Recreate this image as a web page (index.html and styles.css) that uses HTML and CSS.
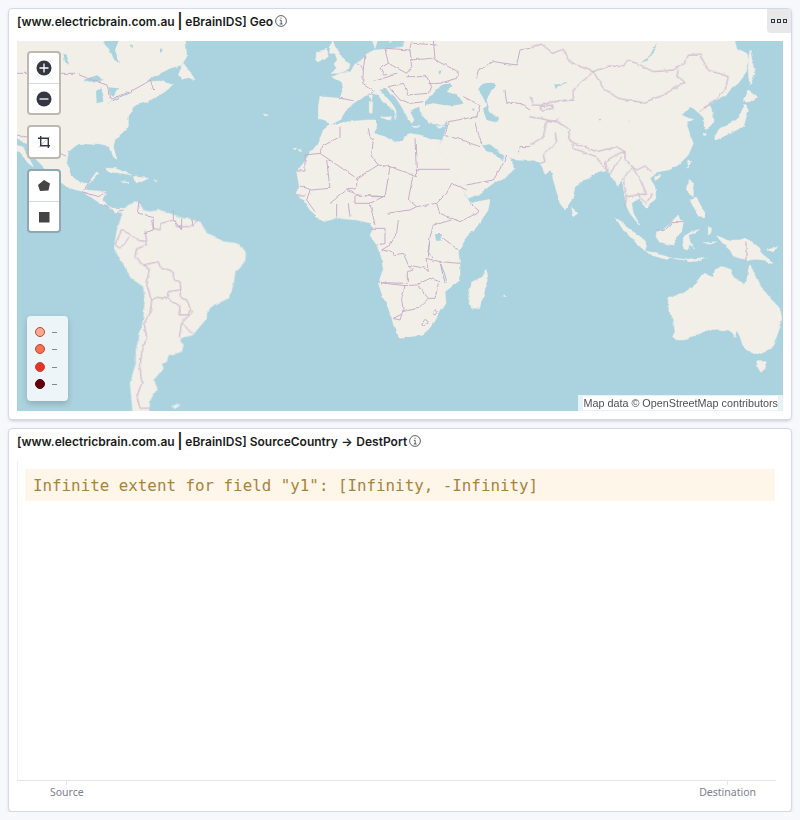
FILE: index.html
```html
<!DOCTYPE html>
<html lang="en">
<head>
  <meta charset="UTF-8" />
  <title>eBrainIDS dashboard</title>
  <link rel="stylesheet" href="styles.css">
</head>
<body>
  <section class="panel panel-map">
    <header class="panel-title">
      <span>[www.electricbrain.com.au <b class="pipe">|</b> eBrainIDS] Geo</span>
      <svg class="info" viewBox="0 0 12 12"><circle cx="6" cy="6" r="5.4"/><path d="M4.8 5.3H6.2V9M4.7 9H7.6M6 2.7V3.9"/></svg>
    </header>
    <button class="panel-menu"><i></i><i></i><i></i></button>

    <div class="map">
      <svg class="map-world" viewBox="17 41 766 370" preserveAspectRatio="none">
        <defs>
          <!-- roughens the hand drawn coast so it reads like a raster tile -->
          <filter id="rough" filterUnits="userSpaceOnUse" x="0" y="20" width="800" height="410" color-interpolation-filters="sRGB">
            <feTurbulence type="fractalNoise" baseFrequency=".14" numOctaves="3" seed="4" result="noise"/>
            <feDisplacementMap in="SourceGraphic" in2="noise" scale="3" xChannelSelector="R" yChannelSelector="G"/>
            <feGaussianBlur stdDeviation=".3"/>
          </filter>
        </defs>
        <g class="world">
          <!-- coordinates in each group are 3x page px, offset by the group's translate -->
          <g class="land" transform="scale(.3333)">
            <polygon points="30,100 555,100 560,170 545,195 510,205 490,215 450,235 440,245 480,243 520,255 495,275 470,290 440,305 410,315 400,320 385,350 385,380 365,400 345,420 340,440 350,478 340,470 330,440 300,435 265,432 230,435 205,455 200,490 212,525 240,550 265,550 290,515 296,520 278,540 262,555 255,570 320,575 310,600 325,620 340,625 375,625 375,640 345,635 330,620 300,610 250,575 200,560 155,525 110,480 90,440 30,400"/>
            <polygon points="30,425 70,445 90,480 100,500 85,490 60,455 30,450"/>
            <polygon points="315,505 345,505 370,515 395,525 365,520 325,515"/>
            <polygon points="400,530 445,535 425,545 405,545"/>
            <polygon points="365,545 385,547 372,550"/>
            <polygon points="462,542 475,543 465,546"/>
            <polygon points="535,225 550,190 570,215 585,240 570,235 545,235"/>
          </g>
          <g class="water" transform="scale(.3333)">
            <polygon points="300,100 365,100 345,150 360,190 340,175 330,150 315,135"/>
            <polygon points="250,240 290,225 312,240 285,250"/>
            <polygon points="288,270 305,262 310,305 290,310"/>
            <polygon points="325,262 355,265 340,290 330,285"/>
            <polygon points="190,160 200,165 207,195 195,185"/>
            <polygon points="385,135 400,140 392,145"/>
            <polygon points="480,145 490,150 480,155"/>
          </g>
          <!-- south america -->
          <g class="land" transform="translate(100 220) scale(.3333)">
            <polygon points="70,-30 85,-45 115,-55 130,-30 150,-25 180,-30 195,-25 215,-18 250,-5 300,5 320,40 345,50 370,65 410,70 437,95 435,125 405,155 400,195 385,235 340,255 320,280 320,295 290,330 278,345 240,355 250,375 245,395 205,405 200,425 185,430 190,445 160,480 172,505 150,540 145,590 100,590 90,490 108,430 108,390 130,300 135,240 130,200 95,175 65,125 42,85 50,35 60,5"/>
            <polygon points="215,558 240,555 225,566"/>
          </g>
          <!-- africa -->
          <g class="land" transform="translate(260 40) scale(.3333)">
            <polygon points="210,255 240,250 265,245 320,240 345,240 350,265 340,280 375,290 400,305 430,305 445,280 480,285 510,298 545,300 535,320 555,355 575,395 600,435 625,480 630,490 690,478 685,510 650,560 640,572 345,572 335,550 290,540 230,535 190,545 150,510 130,480 108,460 118,440 110,395 130,370 150,340 175,310 190,270"/>
            <polygon points="100,325 110,325 105,330"/>
            <polygon points="115,328 125,330 118,334"/>
            <polygon points="10,222 25,225 15,228"/>
          </g>
          <g class="land" transform="translate(360 220) scale(.3333)">
            <polygon points="30,0 40,25 30,45 50,75 65,115 70,150 55,190 65,220 85,265 95,295 110,340 120,358 150,350 190,345 215,320 235,285 258,250 255,215 300,180 300,135 295,95 320,50 365,0"/>
            <polygon points="378,148 385,180 375,210 360,262 335,265 325,230 335,190 365,170"/>
            <polygon points="428,225 440,228 430,230"/>
          </g>
          <g class="water" transform="translate(360 220) scale(.3333)">
            <polygon points="225,42 245,42 245,62 228,62"/>
          </g>
          <!-- europe + middle east -->
          <g class="land" transform="translate(260 40) scale(.3333)">
            <polygon points="812,-15 437,-15 430,20 405,25 378,28 345,30 320,42 305,60 285,72 272,95 245,100 215,110 245,130 250,145 240,175 205,172 180,170 175,200 175,235 195,240 210,255 240,240 255,215 280,190 310,170 335,160 355,165 375,190 395,205 410,220 405,240 412,215 395,190 360,150 375,145 405,170 425,200 445,235 455,250 462,240 450,215 470,205 482,200 485,225 510,250 545,255 562,240 555,280 548,300 535,320 555,355 575,395 600,435 625,475 660,460 700,430 735,415 765,385 745,350 735,345 725,365 705,340 680,335 665,315 690,312 730,345 770,360 812,362"/>
            <polygon points="215,-5 225,20 240,40 250,60 270,72 265,90 235,100 210,100 230,85 222,72 232,60 225,40 208,40"/>
            <polygon points="170,35 200,28 205,50 175,65 168,55"/>
            <polygon points="365,232 395,230 390,243"/>
            <polygon points="328,185 338,185 336,220 328,218"/>
            <polygon points="330,165 337,165 335,182"/>
            <polygon points="455,258 480,260 465,263"/>
            <polygon points="530,260 555,255 540,265"/>
            <polygon points="335,-5 355,-5 345,25"/>
            <polygon points="370,-15 420,-15 390,8"/>
          </g>
          <g class="water" transform="translate(260 40) scale(.3333)">
            <polygon points="495,185 510,170 530,150 545,135 570,128 575,140 560,155 590,165 612,190 580,197 550,195 520,190 495,195"/>
            <polygon points="655,150 670,130 700,128 710,135 695,150 680,180 690,215 718,240 700,245 680,240 670,215 680,195 668,170"/>
            <polygon points="535,95 545,90 540,105"/>
            <polygon points="635,205 645,208 640,214"/>
          </g>
          <!-- asia -->
          <g class="land" transform="translate(530 40) scale(.3333)">
            <polygon points="-10,-15 610,-15 620,25 650,40 655,60 645,100 640,110 625,130 600,150 585,170 560,178 540,195 550,225 552,245 530,268 523,265 522,235 510,222 490,205 480,200 455,225 475,235 490,238 470,250 480,285 490,310 475,345 445,375 415,390 385,395 360,415 375,440 378,475 350,505 340,490 325,475 305,490 310,520 330,555 320,545 300,520 288,495 280,440 275,420 262,440 240,400 225,390 205,395 175,415 135,440 128,475 105,510 90,490 70,420 62,390 45,400 30,370 0,355 -10,362"/>
            <polygon points="660,30 675,100 660,135 655,100 655,60"/>
            <polygon points="640,180 655,150 685,170 650,190"/>
            <polygon points="555,285 570,265 620,240 645,195 655,210 640,260 570,295 555,300"/>
            <polygon points="520,280 530,282 525,288"/>
            <polygon points="125,500 143,520 130,530"/>
            <polygon points="478,360 485,365 470,385"/>
            <polygon points="375,410 390,405 380,422"/>
            <polygon points="470,440 480,420 490,430 490,470 480,465"/>
            <polygon points="480,480 500,475 520,510 525,530 500,520"/>
          </g>
          <g class="water" transform="translate(530 40) scale(.3333)">
            <polygon points="333,68 360,45 380,8 375,30 350,62"/>
            <polygon points="72,135 95,130 118,130 85,135 78,148"/>
            <polygon points="100,178 115,180 105,184"/>
            <polygon points="295,240 303,240 300,246"/>
            <polygon points="205,238 215,236 210,242"/>
          </g>
          <!-- islands and australia -->
          <g class="land" transform="translate(600 190) scale(.3333)">
            <polygon points="205,325 225,315 250,310 272,295 285,285 300,262 315,250 328,258 340,262 345,240 358,230 375,232 395,240 393,255 400,262 415,270 435,285 440,270 445,240 450,225 460,245 470,268 480,290 495,305 510,325 525,340 540,355 545,385 540,410 530,440 515,475 495,485 480,492 460,490 440,480 430,470 420,440 410,420 405,440 395,425 385,420 375,420 350,418 325,420 310,425 295,435 270,440 250,450 230,450 218,440 225,425 222,400 212,375 205,350"/>
            <polygon points="470,515 500,515 495,535 485,547 475,535"/>
            <polygon points="350,137 370,145 385,152 400,150 420,150 435,145 455,155 480,175 490,195 510,210 522,222 505,218 490,210 470,208 450,210 420,205 400,198 390,180 378,170 360,150"/>
            <polygon points="170,125 190,120 205,105 218,92 235,75 240,90 250,95 245,125 225,145 220,165 195,160 178,155 168,140"/>
            <polygon points="48,85 65,95 90,120 115,135 135,155 140,165 135,182 115,165 95,145 70,120"/>
            <polygon points="137,183 165,190 195,198 215,205 200,208 170,200 145,193"/>
            <polygon points="220,205 250,210 290,205 320,205 300,212 270,215 250,208"/>
            <polygon points="250,140 275,125 300,118 280,130 265,135 270,155 285,178 270,165 262,180 255,178 250,160"/>
            <polygon points="295,55 315,65 312,80 295,78 290,65"/>
            <polygon points="280,40 300,45 295,55 282,50"/>
            <polygon points="325,110 335,115 332,130 325,135"/>
            <polygon points="500,180 535,170 520,185"/>
            <polygon points="310,158 350,155 330,163"/>
          </g>
          <path class="river" d="M108 103L120 97L130 93M430 240L428 252L433 258M440 262L443 275L445 282"/>
          <g class="borders">
            <g transform="translate(260 40) scale(.3333)">
              <path d="M240 175L280 182M290 70L310 90L308 130L340 150L335 160M315 45L310 90M340 125L400 105M375 25L385 70L360 85L370 105L415 100M378 25L450 30L455 80L440 100L385 70M450 60L515 55L595 95L590 115L540 130L505 130M455 0L450 30M460 10L530 15M520 0L525 55M650 115L655 90L700 65L770 75L780 30L810 25M440 110L500 110L515 140L505 160L445 165L430 130M430 130L385 140L420 180L450 190L490 185M610 170L660 195L650 230L565 245M645 250L665 310M735 150L740 190L780 190L810 210M810 320L780 320L775 340M565 245L555 290L590 295L660 320M620 435L700 420L730 370L740 345M340 300L335 350L355 375M325 265L330 290L345 300M240 260L240 290L185 320L180 340L290 415L355 375L390 380L470 410M465 295L470 410M470 388L570 388M390 380L380 440L375 470L285 465M458 410L445 480L470 500L530 490L560 460L575 430L620 450M110 393L135 393L135 345L180 340M200 360L210 445L155 450L120 438M290 415L290 445L260 450L210 490M375 470L340 470L290 465L260 450M285 465L285 490L330 490L370 470M230 490L230 530M265 490L270 530M330 490L345 555M380 520L450 510L470 500M530 490L540 520L600 545L660 515L630 490M150 450L140 480L165 515M110 465L135 465"/>
            </g>
            <g transform="translate(360 220) scale(.3333)">
              <path d="M35 25L75 25L75 70L50 75M65 90L95 95L100 105L130 100L145 135L195 145L205 155L198 115L240 125L255 165L260 185M115 0L110 40L90 75L65 90M205 110L210 50L220 15L275 0M250 55L295 90M240 125L300 130M145 135L160 150L142 155L142 190L60 188L135 197L125 235L130 280M130 197L170 195L210 175L240 185M175 197L205 235L175 265L130 275M205 235L225 235L235 190M130 280L100 295L120 300L130 270M195 298L205 305L195 318L185 312ZM222 270L232 276L225 285L217 280Z"/>
            </g>
            <g transform="translate(530 40) scale(.3333)">
              <path d="M0 20L35 13L70 40L100 28L125 70L190 95L235 78L280 80L290 60L320 70L370 95L430 90L465 70L475 45L510 45L535 90L595 110L585 150L555 180L520 205M190 95L220 145L265 175L340 188L400 165L465 125L440 110L445 90M190 95L150 130L130 150L130 180L70 185L35 195L5 195M0 170L10 190M0 230L30 235L75 245L85 235M30 200L65 195L70 205L35 210ZM0 315L40 290L50 245L85 245L120 270L115 300L135 310L200 335L260 320L285 335L285 360L320 390L345 378L365 395M75 275L80 305L40 345L45 365L30 370M130 310L130 325L200 350M200 355L235 395L225 365L265 340L285 335M240 400L275 350M275 420L310 380M310 385L340 440L350 460L320 465L290 470L280 420M320 465L350 490L365 460M285 500L290 470M510 215L555 180"/>
            </g>
            <g transform="translate(17 40) scale(.3333)">
              <path d="M0 100L175 100L225 120L270 135L280 180L300 170L340 155L385 130L400 120L410 150M0 285L50 300L100 325L150 350M200 450L220 420M195 455L245 470L270 455M250 490L275 500M300 515L320 510"/>
            </g>
            <g transform="scale(.3333)">
              <path d="M420 605L415 640L460 650L460 690L430 700M520 630L520 660L545 690M545 655L545 690M575 655L580 680"/>
            </g>
            <g transform="translate(100 220) scale(.3333)">
              <path d="M155 0L160 25L180 30L185 10L220 0M225 0L230 20L270 20L295 0M135 30L140 65L110 60L95 45L65 30L45 75L60 85L90 50M135 65L140 75L110 85L105 110L130 135L175 125L180 140L220 155L220 180L240 185L245 235L262 240L270 265L278 275L245 310L280 340M130 135L148 145L140 195L155 240L170 232L200 235L205 215L240 210M200 235L240 260L237 285L265 285L270 265M155 240L150 280L132 310L140 350L125 400L120 440L125 490L110 530L120 565L150 565M245 310L238 350"/>
            </g>
            <g transform="translate(600 190) scale(.3333)">
              <path d="M438 155L438 210M170 120L195 122L215 95L250 95"/>
            </g>
          </g>
        </g>
      </svg>

      <div class="map-tools">
        <div class="tool-group">
          <button class="tool">
            <svg viewBox="0 0 16 16"><circle class="solid" cx="8" cy="8" r="7.5"/><path class="cut" d="M8 3.5V12.5M3.5 8H12.5"/></svg>
          </button>
          <button class="tool">
            <svg viewBox="0 0 16 16"><circle class="solid" cx="8" cy="8" r="7.5"/><path class="cut" d="M3.5 8H12.5"/></svg>
          </button>
        </div>
        <div class="tool-group">
          <button class="tool">
            <svg viewBox="0 0 16 16"><path class="crop" d="M4.7 2V11.7H14M2 4.3H12.3V14"/><path class="crop-line" d="M2.5 13.5L14 2.5"/></svg>
          </button>
        </div>
        <div class="tool-group tool-group-dark">
          <button class="tool">
            <svg viewBox="0 0 16 16"><polygon class="shape" points="8,2 14,5.5 12.5,12.5 4,13 2,7"/></svg>
          </button>
          <button class="tool">
            <svg viewBox="0 0 16 16"><rect class="shape" x="3" y="3" width="10.5" height="10.5"/></svg>
          </button>
        </div>
      </div>

      <ul class="legend">
        <li><i class="dot dot-1"></i>–</li>
        <li><i class="dot dot-2"></i>–</li>
        <li><i class="dot dot-3"></i>–</li>
        <li><i class="dot dot-4"></i>–</li>
      </ul>

      <div class="attribution"><span>Map data © OpenStreetMap contributors</span></div>
    </div>
  </section>

  <section class="panel panel-flow">
    <header class="panel-title">
      <span>[www.electricbrain.com.au <b class="pipe">|</b> eBrainIDS] SourceCountry <b class="arrow">→</b> DestPort</span>
      <svg class="info" viewBox="0 0 12 12"><circle cx="6" cy="6" r="5.4"/><path d="M4.8 5.3H6.2V9M4.7 9H7.6M6 2.7V3.9"/></svg>
    </header>
    <div class="chart">
      <div class="chart-plot">
        <pre class="chart-error">Infinite extent for field "y1": [Infinity, -Infinity]</pre>
      </div>
      <div class="chart-axis">
        <span>Source</span>
        <span>Destination</span>
      </div>
    </div>
  </section>
</body>
</html>
```

FILE: styles.css
```css
* {
  box-sizing: border-box;
}
body {
  margin: 0;
  padding: 8px 8px 0;
  background: #f6f8fc;
  font-family: Inter, 'Liberation Sans', sans-serif;
  color: #1a1c21;
  display: flex;
  flex-direction: column;
  gap: 8px;
}
.panel {
  position: relative;
  background: #fff;
  border: 1px solid #d3dae6;
  border-radius: 4px;
  box-shadow: 0 2px 3px -1px #98a2b366, 0 1px 5px -2px #98a2b34d;
  display: flex;
  flex-direction: column;
}
.panel-map {
  height: 412px;
}
.panel-flow {
  height: 384px;
}
.panel-title {
  height: 32px;
  padding: 5px 8px 0;
  display: flex;
  align-items: flex-start;
  gap: 2px;
  font-size: 12px;
  font-weight: 600;
  line-height: 16px;
}
.pipe {
  font-size: 15px;
  line-height: 12px;
  font-weight: 600;
  margin: 0 -.4px;
}
.arrow {
  font-weight: 600;
  margin: 0 .5px;
}
.info {
  width: 12px;
  height: 12px;
  margin-top: 1px;
  fill: none;
  stroke: #343741;
  stroke-width: .8;
}
.panel-menu {
  position: absolute;
  top: 0;
  right: 0;
  width: 24px;
  height: 24px;
  padding: 0;
  border: none;
  border-radius: 0 4px 0 4px;
  background: #e8e8ea;
  display: flex;
  justify-content: center;
  align-items: center;
  gap: 2px;
}
.panel-menu i {
  width: 4px;
  height: 4px;
  border: 1px solid #343741;
}

.map {
  position: relative;
  flex: 1;
  margin: 0 8px 8px;
  background: #abd3df;
  overflow: hidden;
}
.map-world {
  display: block;
  width: 100%;
  height: 100%;
}
.world {
  filter: url(#rough);
}
.land polygon {
  fill: #f2efe9;
  stroke: #f2efe9;
  stroke-width: .5;
  stroke-linejoin: round;
  vector-effect: non-scaling-stroke;
}
.water polygon {
  fill: #abd3df;
}
.river {
  fill: none;
  stroke: #8fb6d2;
  stroke-width: .9;
}
.borders path {
  fill: none;
  stroke: #c6aec8;
  stroke-width: 1;
  stroke-linejoin: round;
  vector-effect: non-scaling-stroke;
}

.map-tools {
  position: absolute;
  top: 10px;
  left: 10px;
  display: flex;
  flex-direction: column;
  gap: 10px;
}
.tool-group {
  width: 34px;
  border: 2px solid #bdb8b0;
  border-radius: 4px;
  background: #fff;
  display: flex;
  flex-direction: column;
}
.tool-group-dark {
  border-color: #8fa8b2;
}
.tool {
  height: 30px;
  padding: 0;
  border: none;
  background: none;
  display: flex;
  justify-content: center;
  align-items: center;
}
.tool + .tool {
  border-top: 1px solid #d3dae6;
}
.tool svg {
  width: 16px;
  height: 16px;
}
.solid {
  fill: #343741;
}
.cut {
  fill: none;
  stroke: #fff;
  stroke-width: 1.3;
}
.crop {
  fill: none;
  stroke: #343741;
  stroke-width: 1.4;
}
.crop-line {
  fill: none;
  stroke: #343741;
  stroke-width: .5;
  opacity: .6;
}
.shape {
  fill: #444;
}

.legend {
  position: absolute;
  left: 10px;
  bottom: 10px;
  width: 41px;
  height: 85px;
  margin: 0;
  padding: 7px 0 0 8px;
  list-style: none;
  background: #eef5f8;
  border-radius: 4px;
  box-shadow: 0 3px 6px #0000002e;
  font-size: 10px;
  color: #69707d;
}
.legend li {
  height: 17.5px;
  display: flex;
  align-items: center;
  gap: 7px;
}
.dot {
  width: 10px;
  height: 10px;
  border-radius: 50%;
  border: 1px solid #b0493b;
}
.dot-1 { background: #fcaa8e; }
.dot-2 { background: #fc7050; }
.dot-3 { background: #ef2f27; }
.dot-4 { background: #67000d; border-color: #4a0008; }

.attribution {
  position: absolute;
  right: 0;
  bottom: 0;
  padding: 1px 5px 1px 5px;
  background: #ffffffb3;
  font-family: 'Liberation Sans', sans-serif;
  font-size: 10.8px;
  line-height: 14px;
  color: #505050;
}
.attribution span {
  display: block;
  background: #fff;
}

.chart {
  flex: 1;
  display: flex;
  flex-direction: column;
  margin: 0 15px 0 8px;
}
.chart-plot {
  height: 320px;
  border-left: 1px solid #eef1f6;
  border-bottom: 1px solid #e3e6ef;
  padding: 8px 1px 0 7px;
}
.chart-error {
  margin: 0;
  height: 32px;
  padding: 0 8px;
  background: #fff6ea;
  color: #a8843a;
  font-family: 'DejaVu Sans Mono', monospace;
  font-size: 15.83px;
  line-height: 33px;
}
.chart-axis {
  display: flex;
  justify-content: space-between;
  padding: 4px 20px 0 33px;
  font-family: 'Noto Sans', sans-serif;
  font-size: 10.5px;
  line-height: 14px;
  color: #7c818c;
}
.chart-axis span {
  position: relative;
}
.chart-axis span::before {
  content: "";
  position: absolute;
  top: -4px;
  left: calc(50% - 1px);
  width: 1px;
  height: 4px;
  background: #e3e6ef;
}
```
